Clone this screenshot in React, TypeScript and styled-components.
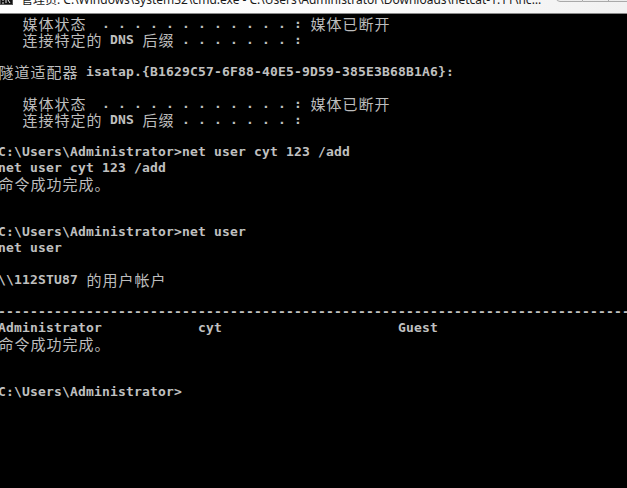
import styled, { createGlobalStyle } from 'styled-components';

const GlobalStyle = createGlobalStyle`
	html, body {
		margin: 0;
		padding: 0;
		background: #000;
		overflow: hidden;
	}
`;

const DOTS_12 = '. . . . . . . . . . . . ';
const DOTS_7 = '. . . . . . . ';

const lines: string[] = [
	`   媒体状态  ${DOTS_12}: 媒体已断开`,
	`   连接特定的 DNS 后缀 ${DOTS_7}: `,
	'',
	'隧道适配器 isatap.{B1629C57-6F88-40E5-9D59-385E3B68B1A6}:',
	'',
	`   媒体状态  ${DOTS_12}: 媒体已断开`,
	`   连接特定的 DNS 后缀 ${DOTS_7}: `,
	'',
	'C:\\Users\\Administrator>net user cyt 123 /add',
	'net user cyt 123 /add',
	'命令成功完成。',
	'',
	'',
	'C:\\Users\\Administrator>net user',
	'net user',
	'',
	'\\\\112STU87 的用户帐户',
	'',
	'-'.repeat(80),
	'Administrator            cyt                      Guest',
	'命令成功完成。',
	'',
	'',
	'C:\\Users\\Administrator>',
];

const isWide = (ch: string) => (ch.codePointAt(0) ?? 0) >= 0x2e80;

const Window = styled.div`
	width: 627px;
	height: 488px;
	background: #000;
	overflow: hidden;
	display: flex;
	flex-direction: column;
`;

const TitleBar = styled.div`
	flex: none;
	height: 13px;
	border-bottom: 1px solid #8a8a8a;
	background: linear-gradient(to right, #ffffff 0%, #fbfbfb 60%, #f1f1f1 100%);
	display: flex;
	align-items: flex-start;
	overflow: hidden;
`;

const AppIcon = styled.svg`
	flex: none;
	margin-top: -9px;
	display: block;
`;

const TitleText = styled.div`
	flex: none;
	width: 521px;
	margin: -7px 0 0 7px;
	font-family: 'Noto Sans', 'Noto Sans CJK SC', sans-serif;
	font-size: 12px;
	line-height: 14px;
	color: #1a1a1a;
	white-space: nowrap;
	overflow: hidden;
	text-overflow: ellipsis;
`;

const Controls = styled.div`
	flex: none;
	display: flex;
	margin: -18px 0 0 14px;
`;

const ControlButton = styled.div<{ $width: number; $first?: boolean }>`
	flex: none;
	width: ${(p) => p.$width}px;
	height: 20px;
	box-sizing: border-box;
	border: 1px solid #a9a9a9;
	border-left-width: ${(p) => (p.$first ? 1 : 0)}px;
	border-radius: ${(p) => (p.$first ? '0 0 0 4px' : '0')};
	background: linear-gradient(#f4f4f4, #ececec);
`;

const Console = styled.div`
	padding-top: 2px;
	margin-left: -2px;
	color: #c0c0c0;
`;

const Line = styled.div`
	display: flex;
	height: 16px;
	white-space: pre;
`;

const Cell = styled.span<{ $wide: boolean }>`
	flex: none;
	width: ${(p) => (p.$wide ? 16 : 8)}px;
	height: 16px;
	line-height: 16px;
	text-align: ${(p) => (p.$wide ? 'center' : 'left')};
	font-family: ${(p) =>
		p.$wide
			? "'Noto Sans CJK SC', 'Noto Sans', sans-serif"
			: "'DejaVu Sans Mono', 'Liberation Mono', monospace"};
	font-size: ${(p) => (p.$wide ? 15 : 13)}px;
	font-weight: ${(p) => (p.$wide ? 400 : 700)};
	color: ${(p) => (p.$wide ? '#bdbdbd' : '#c0c0c0')};
`;

const ConsoleLine = ({ text }: { text: string }) => (
	<Line>
		{Array.from(text).map((ch, i) => (
			<Cell key={i} $wide={isWide(ch)}>
				{ch}
			</Cell>
		))}
	</Line>
);

const App = () => {
	return (
		<>
			<GlobalStyle />
			<Window>
				<TitleBar>
					<AppIcon width="14" height="14" viewBox="0 0 14 14">
						<rect x="0" y="0" width="13" height="14" fill="#111" />
						<rect x="0.5" y="0.5" width="12" height="13" fill="none" stroke="#555" />
						<path d="M2 9h2M2 12h2M6 9v3M8 9l2 3" stroke="#e8e8e8" strokeWidth="1" />
					</AppIcon>
					<TitleText>
						管理员: C:\Windows\system32\cmd.exe - C:\Users\Administrator\Downloads\netcat-1.11\nc.exe -l -p 23 -t -e cmd.exe
					</TitleText>
					<Controls>
						<ControlButton $width={27} $first />
						<ControlButton $width={26} />
						<ControlButton $width={45} />
					</Controls>
				</TitleBar>
				<Console>
					{lines.map((text, i) => (
						<ConsoleLine key={i} text={text} />
					))}
				</Console>
			</Window>
		</>
	);
};

export default App;
